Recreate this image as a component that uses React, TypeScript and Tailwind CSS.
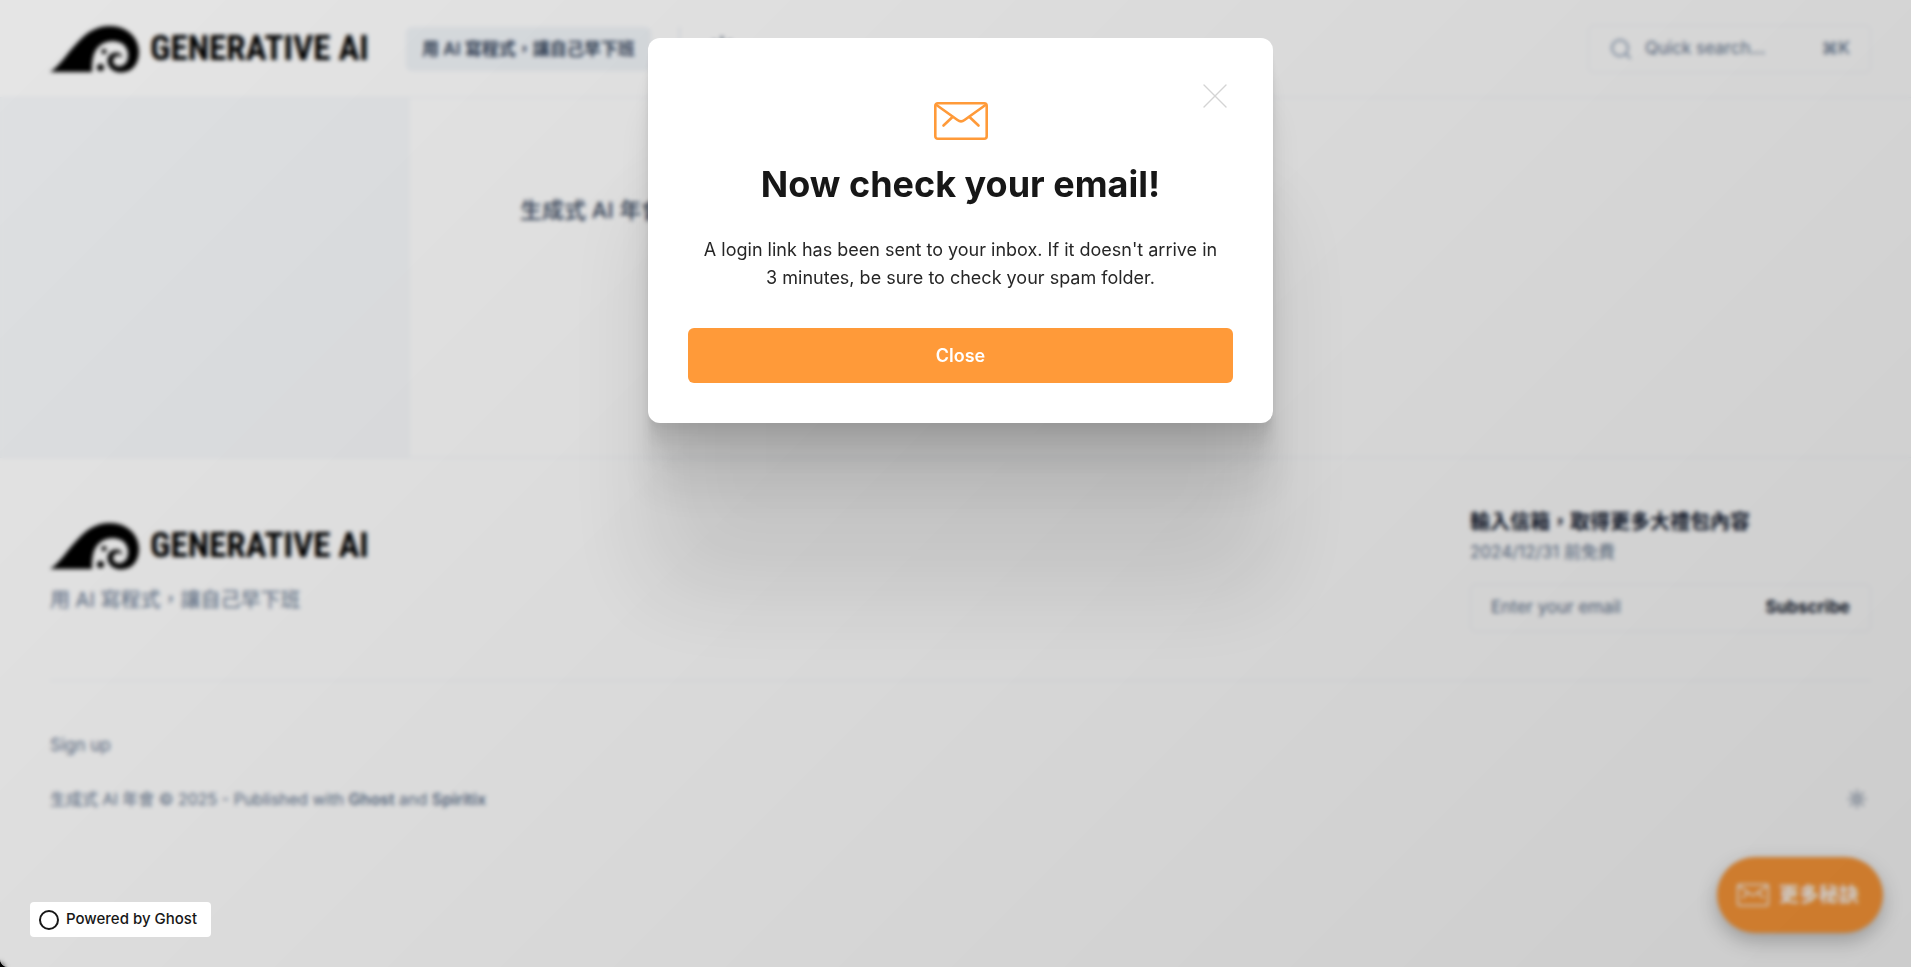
import { Search, Sun, X } from 'lucide-react'

function Envelope({ className }: { className: string }) {
  return (
    <svg viewBox="0 0 54 38" fill="none" stroke="currentColor" strokeWidth="2.6" strokeLinecap="round" strokeLinejoin="round" className={className} aria-hidden="true">
      <rect x="1.3" y="1.3" width="51.4" height="35.4" rx="2.5" />
      <path d="M2.5 3 L23.5 18 Q27 20.6 30.5 18 L51.5 3" />
      <path d="M18.5 15 L9.5 23.5 M35.5 15 L44.5 23.5" />
    </svg>
  )
}

function Logo() {
  return (
    <a href="#" className="flex w-80 items-center gap-2.5 text-black">
      <svg viewBox="0 0 90 48" className="h-12 w-[90px] shrink-0" aria-hidden="true">
        <path
          fill="currentColor"
          d="M0 47 C10 41 17 28 28 17 C37 7 47 1 60 1 C77 1 89 13 89 27 C89 39 82 47.500 71 47.500 C63 47.500 57.500 42 57.500 36 C57.500 31 61 27.500 66 27.500 C70 27.500 72.500 30 72.500 33 C71 31 68 30.500 66 31.500 C62.500 33 62 37.500 65 40 C69 43 75 40.500 77 36 C80 29 77 21 71 18 C66 15.500 59 15.500 54 18 C45 22 41.500 31 42 47 Z"
        />
        <circle cx="54" cy="26.500" r="2.500" fill="currentColor" />
        <circle cx="50.500" cy="42.500" r="3.500" fill="currentColor" />
      </svg>
      <span className="whitespace-nowrap font-['Roboto_Condensed','Liberation_Sans_Narrow','Liberation_Sans',sans-serif] text-[35px] font-bold leading-12">
        GENERATIVE AI
      </span>
    </a>
  )
}

export default function App() {
  return (
    <div className="relative min-h-screen overflow-hidden bg-black font-[Inter,'Noto_Sans_CJK_TC',sans-serif]">
      <div className="flex min-h-screen flex-col rounded-bl-lg bg-white text-slate-600">
        <header className="flex items-center border-b border-slate-100 pt-[25px] pr-10 pb-6 pl-[50px]">
          <Logo />
          <nav className="ml-9 flex items-center gap-7">
            <a href="#" className="whitespace-nowrap rounded-md bg-slate-100 px-4 py-2 text-[17px] font-semibold leading-7 text-slate-700">
              用 AI 寫程式，讓自己早下班
            </a>
            <span className="h-11 w-px bg-slate-200" />
            <button aria-label="Toggle theme">
              <Sun className="size-7" />
            </button>
          </nav>
          <button className="ml-auto flex h-12 w-[283px] items-center gap-3 rounded-md border border-slate-100 px-5 text-[17px] text-slate-500">
            <Search className="size-6 text-slate-400" strokeWidth={2} />
            Quick search...
            <kbd className="ml-auto font-[Inter,'DejaVu_Sans',sans-serif] text-[17px] font-medium">⌘K</kbd>
          </button>
        </header>

        <main className="flex h-[359px]">
          <aside className="w-[410px] bg-slate-50" />
          <h2 className="px-[110px] pt-24 text-[22px] font-medium leading-8 text-slate-700">生成式 AI 年會</h2>
        </main>

        <footer className="border-t border-slate-100 pt-14 pr-10 pl-[50px]">
          <div className="flex justify-between pb-12">
            <div className="pt-2">
              <Logo />
              <p className="pt-4 text-xl leading-7 text-slate-500">用 AI 寫程式，讓自己早下班</p>
            </div>
            <form className="w-[401px]">
              <h3 className="-mt-2 text-xl font-bold leading-8 text-slate-900">輸入信箱，取得更多大禮包內容</h3>
              <p className="text-[17px] leading-7 text-slate-500">2024/12/31 前免費</p>
              <div className="mt-[18px] flex h-12 items-center rounded-md border border-slate-100 px-5">
                <input type="email" aria-label="Email" placeholder="Enter your email" className="min-w-0 flex-1 bg-transparent text-[17px] placeholder:text-slate-500" />
                <button type="button" className="text-[17px] font-bold text-slate-900">Subscribe</button>
              </div>
            </form>
          </div>
          <div className="border-t border-slate-100 pt-12 leading-8 text-slate-500">
            <a href="#" className="text-[17px]">Sign up</a>
            <div className="mt-[22px] flex items-center justify-between pr-1">
              <p>
                生成式 AI 年會 © 2025 - Published with <a href="#" className="font-semibold">Ghost</a> and{' '}
                <a href="#" className="font-semibold">Spiritix</a>
              </p>
              <button aria-label="Theme">
                <Sun className="size-5" />
              </button>
            </div>
          </div>
        </footer>
      </div>

      <button className="absolute right-7 bottom-[34px] flex h-[76px] items-center gap-2.5 rounded-full bg-[#ff9a39] pr-6 pl-5 text-xl font-semibold text-white shadow-[0_8px_20px_rgba(0,0,0,0.25)]">
        <Envelope className="h-6 w-8" />
        更多秘訣
      </button>

      <div className="absolute inset-0 flex items-start justify-center rounded-bl-lg bg-linear-[315deg] from-black/20 to-black/10 pt-[38px] pl-2.5 backdrop-blur-[2px]">
        <section
          role="dialog"
          aria-labelledby="dialog-title"
          className="relative flex w-[625px] flex-col items-center rounded-xl bg-white px-10 pt-16 pb-10 text-center shadow-[0_5px_3px_rgba(0,0,0,0.028),0_11px_6px_rgba(0,0,0,0.04),0_21px_12px_rgba(0,0,0,0.05),0_38px_22px_rgba(0,0,0,0.06),0_70px_41px_rgba(0,0,0,0.072),0_168px_98px_rgba(0,0,0,0.1)]"
        >
          <button aria-label="Dismiss" className="absolute top-9 right-9 text-neutral-300">
            <X className="size-11" strokeWidth={0.75} />
          </button>
          <Envelope className="h-[38px] w-[54px] text-[#ff9a39]" />
          <h1 id="dialog-title" className="mt-5 text-4xl font-bold leading-12 text-neutral-900">Now check your email!</h1>
          <p className="mt-7 px-3 text-lg leading-7 text-neutral-800">
            A login link has been sent to your inbox. If it doesn't arrive in 3 minutes, be sure to check your spam folder.
          </p>
          <button className="mt-9 h-[55px] w-full rounded-md bg-[#ff9a39] text-lg font-semibold text-white">Close</button>
        </section>
      </div>

      <a href="#" className="absolute bottom-[30px] left-[30px] flex h-[35px] items-center gap-1.5 rounded-sm bg-white pr-3.5 pl-2 text-[15px] font-medium text-neutral-900">
        <svg viewBox="0 0 22 22" className="size-[22px]" aria-hidden="true">
          <circle cx="11" cy="11" r="9" fill="none" stroke="currentColor" strokeWidth="2" />
        </svg>
        Powered by Ghost
      </a>
    </div>
  )
}
